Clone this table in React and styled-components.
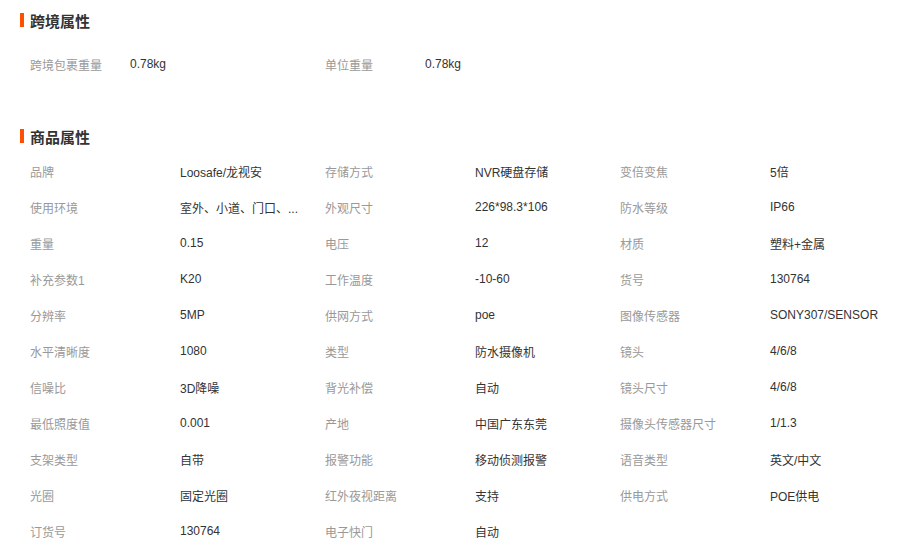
import React from "react";
import styled, { createGlobalStyle } from "styled-components";

const GlobalStyle = createGlobalStyle`
  body {
    margin: 0;
    background: #ffffff;
    font-family: "Liberation Sans", "Noto Sans CJK SC", sans-serif;
  }
`;

const crossBorder = [
  ["跨境包裹重量", "0.78kg"],
  ["单位重量", "0.78kg"],
];

const goods = [
  ["品牌", "Loosafe/龙视安"],
  ["存储方式", "NVR硬盘存储"],
  ["变倍变焦", "5倍"],
  ["使用环境", "室外、小道、门口、..."],
  ["外观尺寸", "226*98.3*106"],
  ["防水等级", "IP66"],
  ["重量", "0.15"],
  ["电压", "12"],
  ["材质", "塑料+金属"],
  ["补充参数1", "K20"],
  ["工作温度", "-10-60"],
  ["货号", "130764"],
  ["分辨率", "5MP"],
  ["供网方式", "poe"],
  ["图像传感器", "SONY307/SENSOR"],
  ["水平清晰度", "1080"],
  ["类型", "防水摄像机"],
  ["镜头", "4/6/8"],
  ["信噪比", "3D降噪"],
  ["背光补偿", "自动"],
  ["镜头尺寸", "4/6/8"],
  ["最低照度值", "0.001"],
  ["产地", "中国广东东莞"],
  ["摄像头传感器尺寸", "1/1.3"],
  ["支架类型", "自带"],
  ["报警功能", "移动侦测报警"],
  ["语音类型", "英文/中文"],
  ["光圈", "固定光圈"],
  ["红外夜视距离", "支持"],
  ["供电方式", "POE供电"],
  ["订货号", "130764"],
  ["电子快门", "自动"],
];

const Page = styled.div`
  width: 903px;
  padding: 10px 0 0 20px;
  box-sizing: border-box;
`;

const Section = styled.section`
  margin-bottom: ${(p) => p.$after || 0}px;
`;

const Title = styled.h3`
  margin: 0;
  display: flex;
  align-items: center;
  gap: 6px;
  height: 20px;
  font-size: 15px;
  font-weight: bold;
  color: #333333;

  &::before {
    content: "";
    width: 4px;
    height: 14px;
    background: #ff4f00;
  }
`;

const Grid = styled.div`
  display: grid;
  grid-template-columns: repeat(${(p) => p.$cols}, 295px);
  padding: ${(p) => p.$top}px 0 0 10px;
`;

const Cell = styled.div`
  display: flex;
  height: 36px;
  align-items: center;
  font-size: 12px;
`;

const Label = styled.span`
  flex: 0 0 ${(p) => p.$w}px;
  color: #999999;
`;

const Value = styled.span`
  color: #333333;
  white-space: nowrap;
`;

const PropGrid = ({ items, cols, labelWidth, top }) => (
  <Grid $cols={cols} $top={top}>
    {items.map(([k, v]) => (
      <Cell key={k}>
        <Label $w={labelWidth}>{k}</Label>
        <Value>{v}</Value>
      </Cell>
    ))}
  </Grid>
);

export default function App() {
  return (
    <>
      <GlobalStyle />
      <Page>
        <Section $after={44}>
          <Title>跨境属性</Title>
          <PropGrid items={crossBorder} cols={2} labelWidth={100} top={16} />
        </Section>
        <Section>
          <Title>商品属性</Title>
          <PropGrid items={goods} cols={3} labelWidth={150} top={7} />
        </Section>
      </Page>
    </>
  );
}
